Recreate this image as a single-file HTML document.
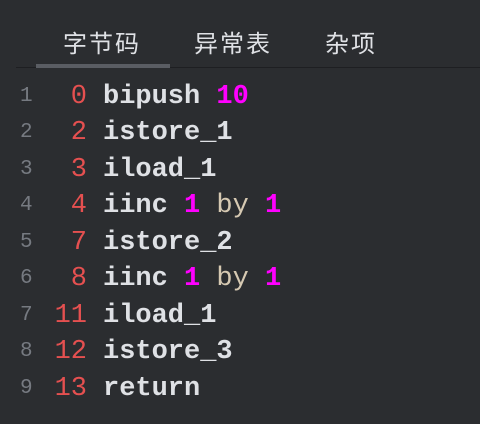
<!DOCTYPE html>
<html><head><style>
body{margin:0;width:480px;height:424px;background:#2b2d30;overflow:hidden;position:relative;font-family:"Liberation Mono",monospace}
.tab{position:absolute;top:24px;font:24px "Liberation Sans","WenQuanYi Zen Hei",sans-serif;color:#dfe1e5;letter-spacing:2px}
.sep{position:absolute;left:16px;right:0;top:67px;height:1px;background:#1e1f22}
.ul{position:absolute;left:36px;width:134px;top:64px;height:4px;background:#5a5d63}
.ln{position:absolute;left:0;height:36px;width:480px;font-size:27px;line-height:36px}
.n{position:absolute;left:20px;font-size:21px;color:#767a81;font-weight:normal}
.o{position:absolute;right:393px;color:#e55050;font-weight:normal}
.c{position:absolute;left:103px;color:#dfe1e5;font-weight:bold;white-space:pre}
.m{color:#ff00ff}.b{color:#d6c9b2;font-weight:normal}
</style></head><body>
<div class="tab" style="left:63px">字节码</div>
<div class="tab" style="left:194px">异常表</div>
<div class="tab" style="left:325px">杂项</div>
<div class="sep"></div><div class="ul"></div>
<div class="ln" style="top:79px"><span class="n">1</span><span class="o">0</span><span class="c">bipush <span class="m">10</span></span></div>
<div class="ln" style="top:115px"><span class="n">2</span><span class="o">2</span><span class="c">istore_1</span></div>
<div class="ln" style="top:152px"><span class="n">3</span><span class="o">3</span><span class="c">iload_1</span></div>
<div class="ln" style="top:188px"><span class="n">4</span><span class="o">4</span><span class="c">iinc <span class="m">1</span> <span class="b">by</span> <span class="m">1</span></span></div>
<div class="ln" style="top:225px"><span class="n">5</span><span class="o">7</span><span class="c">istore_2</span></div>
<div class="ln" style="top:261px"><span class="n">6</span><span class="o">8</span><span class="c">iinc <span class="m">1</span> <span class="b">by</span> <span class="m">1</span></span></div>
<div class="ln" style="top:298px"><span class="n">7</span><span class="o">11</span><span class="c">iload_1</span></div>
<div class="ln" style="top:334px"><span class="n">8</span><span class="o">12</span><span class="c">istore_3</span></div>
<div class="ln" style="top:371px"><span class="n">9</span><span class="o">13</span><span class="c">return</span></div>
</body></html>
